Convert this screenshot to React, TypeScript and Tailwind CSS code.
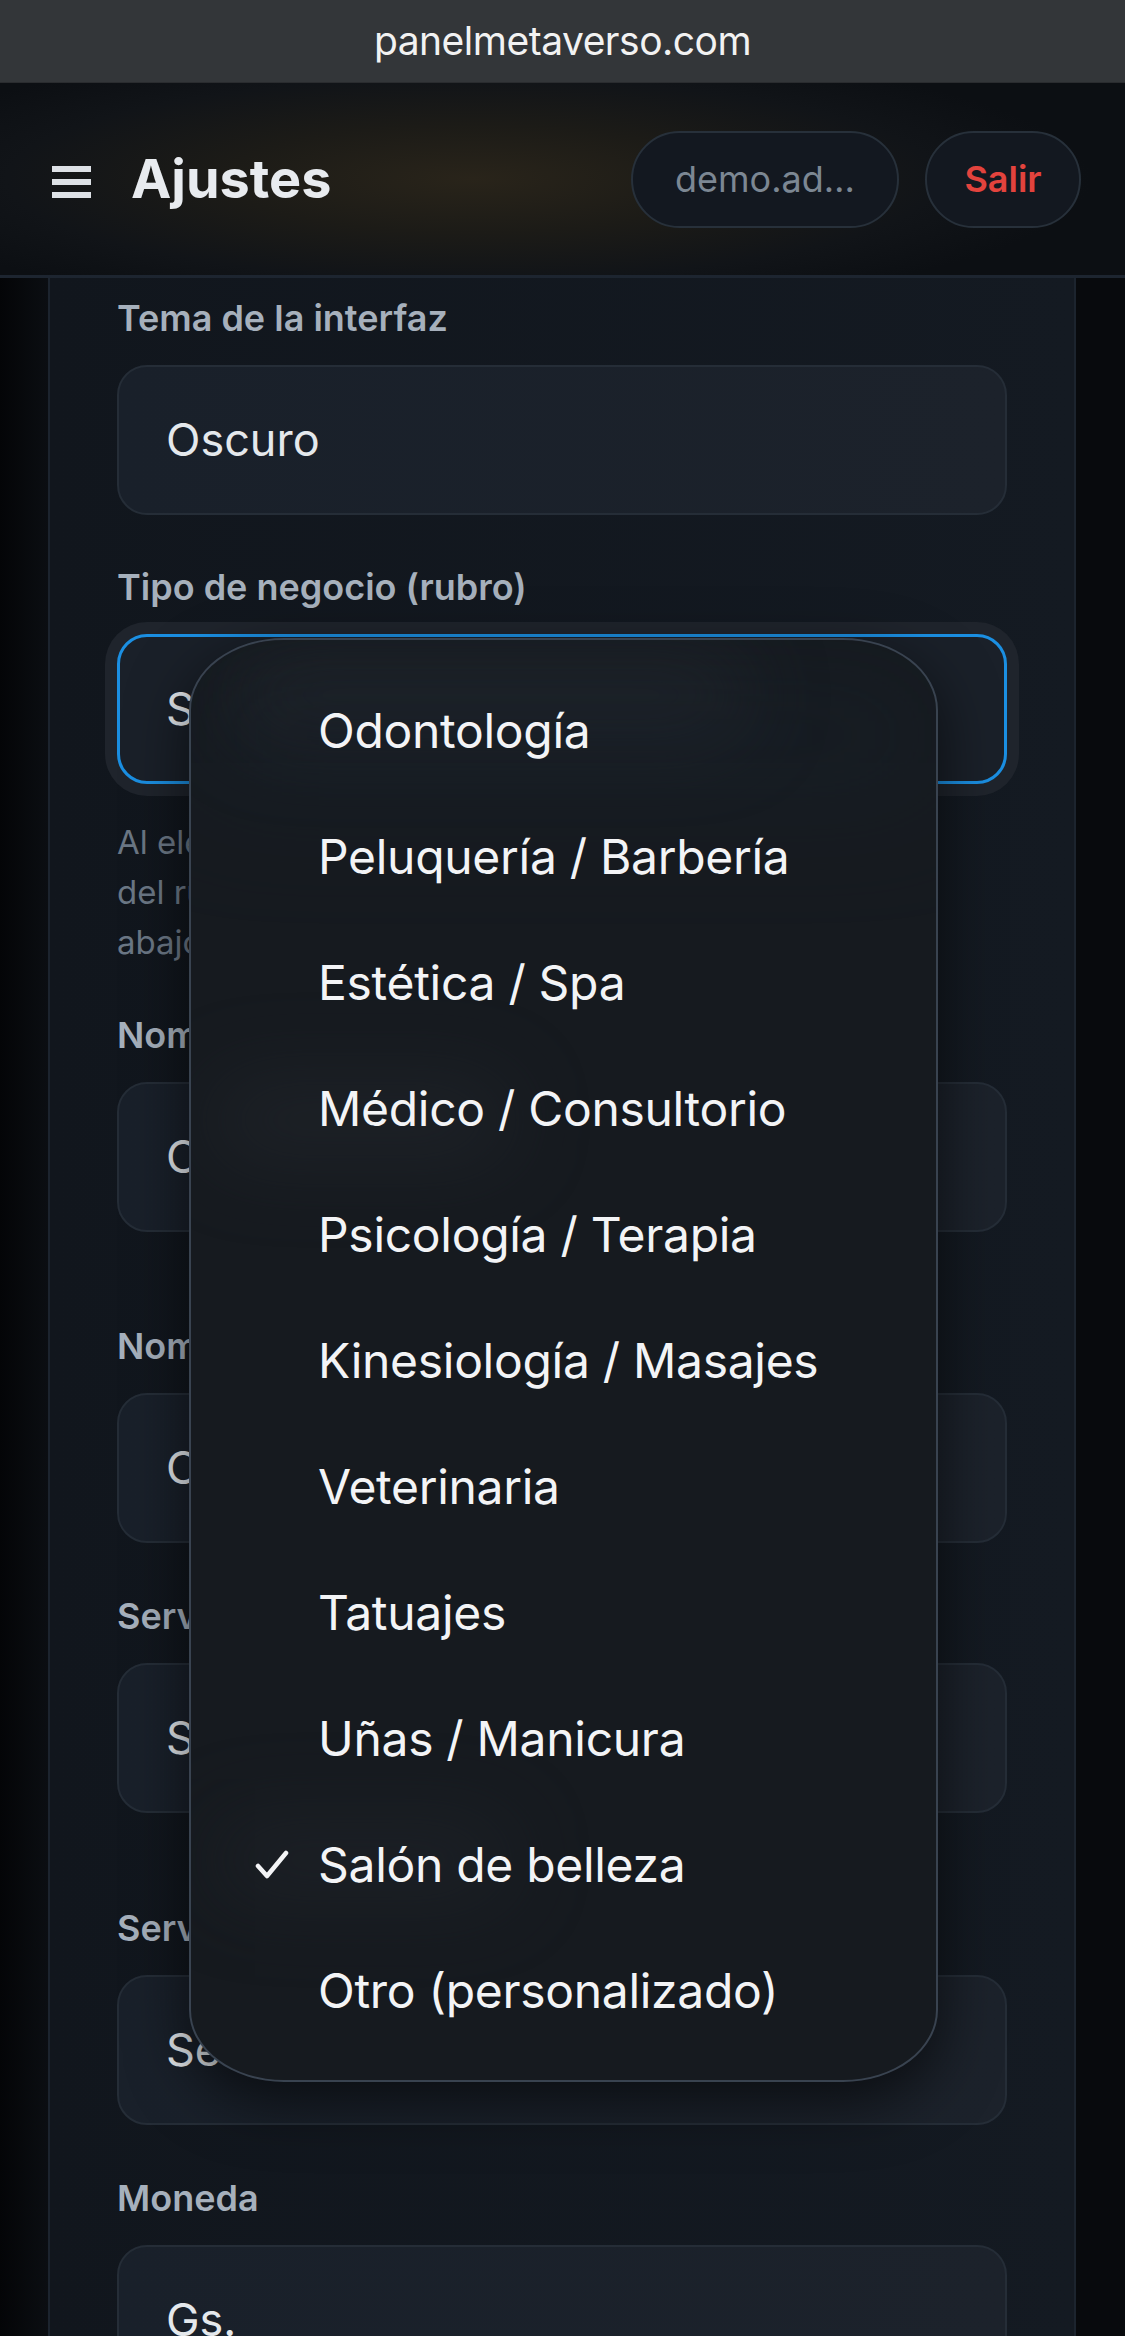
import React from "react";

const FONT = { fontFamily: "Inter, 'Noto Sans', sans-serif" };

function Label({ children }: { children: React.ReactNode }) {
  return (
    <div className="text-[36px] leading-[44px] font-semibold text-[#a6b0bc] mb-[25px] whitespace-nowrap">
      {children}
    </div>
  );
}

function Input({ value }: { value: string }) {
  return (
    <div className="h-[150px] rounded-[30px] border-2 border-[#252d37] bg-[linear-gradient(90deg,#19202a,#1c222b)] px-[47px] flex items-center text-[45px] text-[#e4e8ec] whitespace-nowrap overflow-hidden">
      {value}
    </div>
  );
}

const ITEMS = [
  "Odontología",
  "Peluquería / Barbería",
  "Estética / Spa",
  "Médico / Consultorio",
  "Psicología / Terapia",
  "Kinesiología / Masajes",
  "Veterinaria",
  "Tatuajes",
  "Uñas / Manicura",
  "Salón de belleza",
  "Otro (personalizado)",
];

export default function App() {
  return (
    <div
      className="relative w-[1125px] h-[2336px] overflow-hidden bg-[#07090c] flex flex-col"
      style={FONT}
    >
      {/* URL bar */}
      <div className="h-[83px] shrink-0 bg-[#333639] flex items-center justify-center border-b border-[#2a2c2f]">
        <span className="text-[39px] text-[#f2f2f2] tracking-[-0.5px]">panelmetaverso.com</span>
      </div>

      {/* Header */}
      <div className="h-[195px] shrink-0 border-b-[3px] border-[#1d2530] bg-[radial-gradient(ellipse_55%_70%_at_42%_50%,#29241a_0%,#1c1b17_40%,#111418_75%,#0c0f13_100%)] flex items-center pl-[52px] pr-[44px]">
        <div className="flex flex-col gap-[7px] w-[39px] mt-[6px]">
          <div className="h-[6px] bg-[#dde1e6]" />
          <div className="h-[6px] bg-[#dde1e6]" />
          <div className="h-[6px] bg-[#dde1e6]" />
        </div>
        <div className="ml-[40px] text-[54px] font-bold text-[#e8ebef] leading-none">
          Ajustes
        </div>
        <div className="ml-auto flex items-center gap-[26px]">
          <div className="h-[97px] w-[268px] rounded-full border-2 border-[#27303a] bg-[#131820] flex items-center justify-center text-[36px] text-[#7c8793]">
            demo.ad…
          </div>
          <div className="h-[97px] w-[156px] rounded-full border-2 border-[#27303a] bg-[#131820] flex items-center justify-center text-[36px] font-semibold text-[#e3433d]">
            Salir
          </div>
        </div>
      </div>

      {/* Main */}
      <div className="flex flex-1 min-h-0">
        <div className="w-[48px] shrink-0 bg-[linear-gradient(90deg,#040507,#0b0e12)]" />
        <div className="w-[1028px] shrink-0 border-x-2 border-[#1c242e] bg-[linear-gradient(90deg,#11161d,#141a22)] px-[67px] pt-[18px]">
          <div className="flex flex-col">
            <Label>Tema de la interfaz</Label>
            <Input value="Oscuro" />

            <div className="mt-[50px]">
              <Label>Tipo de negocio (rubro)</Label>
              <div className="h-[150px] rounded-[30px] border-[3px] border-[#1b8fe2] bg-[#1a2029] shadow-[0_0_0_12px_#1f242c] px-[46px] flex items-center text-[45px] text-[#e4e8ec]">
                Salón de belleza
              </div>
            </div>

            <div className="mt-[33px] text-[33px] leading-[50px] text-[#6b7785]">
              Al elegir un rubro se cargan textos de ejemplo
              <br />
              del rubro elegido. Podés cambiarlos
              <br />
              abajo.
            </div>

            <div className="mt-[46px]">
              <Label>Nombre del cliente (singular)</Label>
              <Input value="Cliente" />
            </div>
            <div className="mt-[92px]">
              <Label>Nombre del cliente (plural)</Label>
              <Input value="Clientes" />
            </div>
            <div className="mt-[51px]">
              <Label>Servicio (singular)</Label>
              <Input value="Servicio" />
            </div>
            <div className="mt-[93px]">
              <Label>Servicios (plural)</Label>
              <Input value="Servicios" />
            </div>
            <div className="mt-[51px]">
              <Label>Moneda</Label>
              <Input value="Gs." />
            </div>
          </div>
        </div>
        <div className="flex-1 bg-[#080a0d]" />
      </div>

      {/* Dropdown menu overlay */}
      <div className="absolute top-[638px] left-[189px] w-[749px] h-[1444px] rounded-[95px/72px] border-2 border-[#394350] bg-[#161a1f] shadow-[0_20px_60px_rgba(0,0,0,0.6)] overflow-hidden py-[28px]">
        <div className="absolute left-[40px] top-[10px] w-[520px] h-[90px] rounded-full bg-[#22262c] blur-2xl opacity-70" />
        <div className="absolute left-[0px] top-[40px] w-[749px] h-[110px] bg-[#1a2530] blur-3xl opacity-40" />
        <div className="absolute left-[20px] top-[440px] w-[300px] h-[80px] rounded-full bg-[#23272d] blur-2xl opacity-60" />
        <div className="absolute left-[20px] top-[1180px] w-[300px] h-[80px] rounded-full bg-[#20242a] blur-2xl opacity-60" />
        <div className="relative flex flex-col">
          {ITEMS.map((it) => (
            <div key={it} className="relative h-[126px] flex items-center pl-[127px] text-[48px] tracking-[-0.3px] text-[#f3f4f6] whitespace-nowrap">
              {it === "Salón de belleza" && (
                <svg
                  className="absolute left-[64px] top-1/2 -translate-y-1/2"
                  width="34"
                  height="30"
                  viewBox="0 0 34 30"
                  fill="none"
                >
                  <path d="M3 16 L12 26 L31 3" stroke="#f3f4f6" strokeWidth="4.5" strokeLinecap="round" strokeLinejoin="round" />
                </svg>
              )}
              {it}
            </div>
          ))}
        </div>
      </div>
    </div>
  );
}
